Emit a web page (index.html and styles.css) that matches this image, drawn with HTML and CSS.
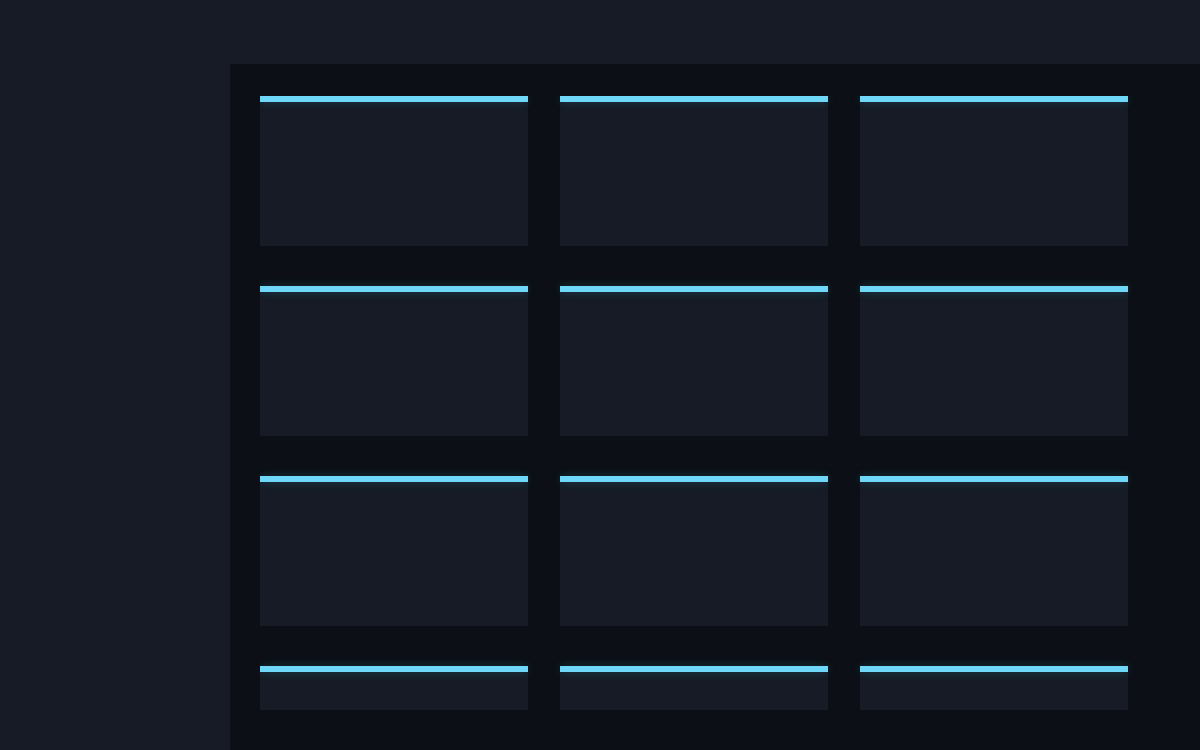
FILE: index.html
```html
<!DOCTYPE html>
<html>
<head>
<meta charset="utf-8">
<link rel="stylesheet" href="styles.css">
</head>
<body>
<div class="app">
  <header class="topbar"></header>
  <div class="body">
    <aside class="sidebar"></aside>
    <main class="main">
      <div class="grid">
        <div class="card"></div><div class="card"></div><div class="card"></div>
        <div class="card"></div><div class="card"></div><div class="card"></div>
        <div class="card"></div><div class="card"></div><div class="card"></div>
        <div class="card"></div><div class="card"></div><div class="card"></div>
      </div>
    </main>
  </div>
</div>
</body>
</html>
```
FILE: styles.css
```css
html, body {
  margin: 0;
  padding: 0;
  height: 100%;
  background: #161b26;
  font-family: "Liberation Sans", Arial, sans-serif;
  overflow: hidden;
}
.app {
  display: flex;
  flex-direction: column;
  height: 750px;
}
.topbar {
  height: 64px;
  flex: none;
  background: #161b26;
}
.body {
  display: flex;
  flex: 1;
  min-height: 0;
}
.sidebar {
  width: 230px;
  flex: none;
  background: #161b26;
}
.main {
  flex: 1;
  background: #0c0f15;
  padding: 32px 30px 40px;
  display: flex;
  flex-direction: column;
  min-height: 0;
}
.grid {
  flex: 1;
  min-height: 0;
  overflow: hidden;
  display: grid;
  grid-template-columns: repeat(3, 268px);
  grid-auto-rows: 150px;
  column-gap: 32px;
  row-gap: 40px;
}
.card {
  position: relative;
  background: #161b25;
}
.card::before {
  content: "";
  position: absolute;
  left: 0;
  right: 0;
  top: 0;
  height: 6px;
  background: #6fd7f7;
  box-shadow: 0 0 10px rgba(50, 200, 230, 0.22);
}
```
